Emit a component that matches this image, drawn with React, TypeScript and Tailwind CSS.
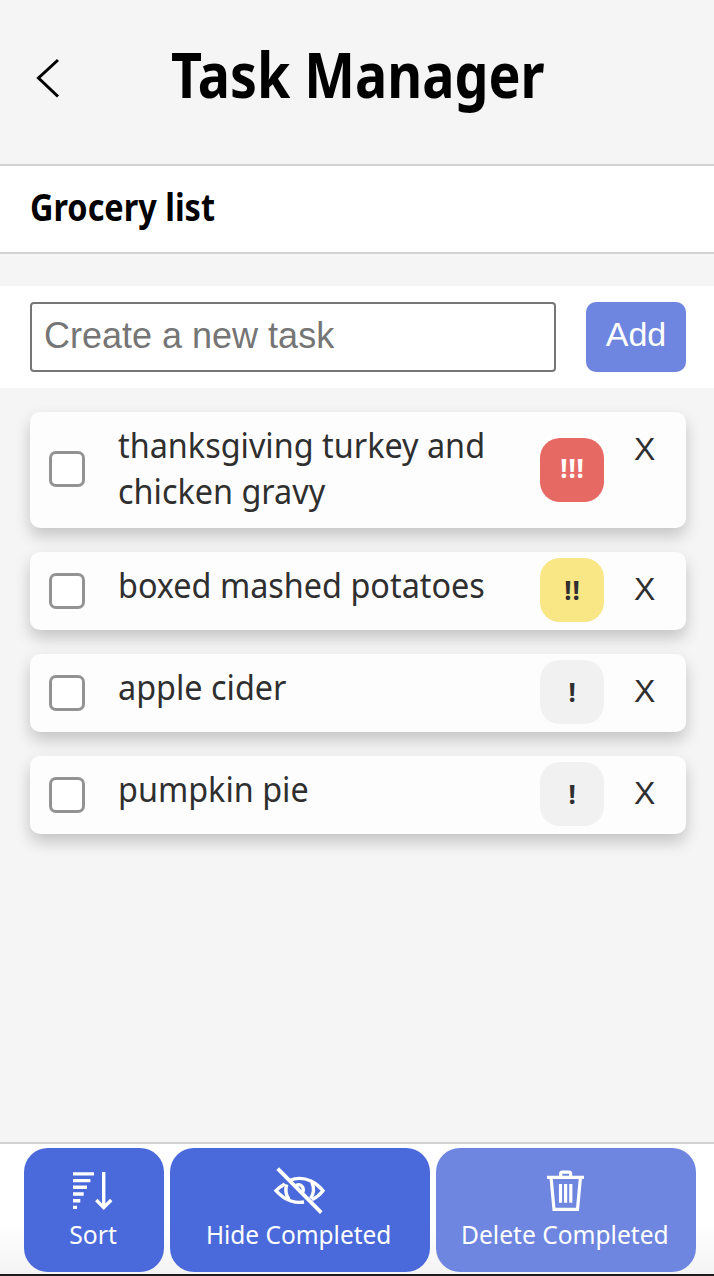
import React from "react";

type Priority = 1 | 2 | 3;

const tasks: { id: number; text: string; priority: Priority }[] = [
  { id: 1, text: "thanksgiving turkey and chicken gravy", priority: 3 },
  { id: 2, text: "boxed mashed potatoes", priority: 2 },
  { id: 3, text: "apple cider", priority: 1 },
  { id: 4, text: "pumpkin pie", priority: 1 },
];

const badgeStyle: Record<Priority, string> = {
  1: "mb-[2px] bg-[#f1f1f1] text-[#2f2f2f]",
  2: "mb-[2px] bg-[#f9e685] text-[#2f2f2f]",
  3: "pb-1 bg-[#e66a63] text-white",
};

function BackIcon() {
  return (
    <svg width="28" height="44" viewBox="34 56 28 44" fill="none" stroke="#000" strokeWidth="3">
      <path d="M58 60 L38.5 78 L58 96.5" />
    </svg>
  );
}

function SortIcon() {
  return (
    <svg className="-ml-[4px]" width="44" height="48" viewBox="70 1167 44 48" fill="none" stroke="#fff" strokeWidth="3.4">
      <path d="M73 1173.9H94M73 1180.6H90.4M73 1187.3H87M73 1194H83.7M73 1200.7H80.3M73 1207.4H77" />
      <path d="M103.7 1172V1207.5M96.3 1200L103.7 1207.6L111.2 1200" />
    </svg>
  );
}

function HiddenIcon() {
  return (
    <svg width="56" height="48" viewBox="272 1167 56 48" fill="none" stroke="#fff" strokeWidth="3.4">
      <path d="M289.5 1180.6Q300 1176 311 1181Q318 1184.5 323 1190.7Q318.5 1196.5 312 1199.7" />
      <path d="M284.8 1184Q279.5 1187 276 1190.7Q283 1198.5 291 1201Q297.5 1203.2 304 1202" />
      <path d="M286.8 1184.5Q284 1192 289 1199.5" />
      <path d="M311.8 1182Q315.8 1191 310.5 1198.5" />
      <path d="M296 1185.5Q300 1183.5 302.6 1187Q304 1190 302.5 1192.5" />
      <path d="M277.7 1168.6L321.3 1212.6" strokeWidth="3.8" />
    </svg>
  );
}

function TrashIcon() {
  return (
    <svg className="-ml-[2px]" width="42" height="48" viewBox="544 1167 42 48" fill="none" stroke="#fff" strokeWidth="3.2">
      <path d="M547 1177.4H584" strokeWidth="3.4" />
      <path d="M560.7 1177V1173.8Q560.7 1172.1 562.4 1172.1H568.8Q570.6 1172.1 570.6 1173.8V1177" />
      <path d="M551.1 1178L554 1209.3H577.5L580.4 1178" />
      <path d="M560.5 1184V1202.7M565.6 1184V1202.7M570.8 1184V1202.7" />
    </svg>
  );
}

export default function App() {
  return (
    <div className="flex h-[1276px] w-[714px] flex-col overflow-hidden bg-[#f5f5f5] font-['Noto_Sans',sans-serif]">
      <header className="relative flex h-[166px] shrink-0 items-start justify-center border-b-2 border-[#d2d2d2] pt-[33px]">
        <button className="absolute left-[34px] top-[56px]" aria-label="Back">
          <BackIcon />
        </button>
        <h1 className="ml-[2px] scale-x-[0.854] whitespace-nowrap text-[63px] font-bold leading-[82px] text-black">Task Manager</h1>
      </header>
      <section className="flex h-[88px] shrink-0 items-start border-b-2 border-[#d2d2d2] bg-white pl-[30px] pt-[15px]">
        <h2 className="origin-left scale-x-[0.877] whitespace-nowrap text-[37px] font-bold leading-[52px] text-black">Grocery list</h2>
      </section>
      <form className="mt-8 flex h-[102px] shrink-0 gap-[30px] bg-white pl-[30px] pr-[28px] pt-4 font-['Liberation_Sans',Arial,sans-serif]">
        <input
          className="h-[70px] w-[526px] rounded-[4px] border-2 border-[#767676] bg-white pb-[3px] pl-3 text-[36px] outline-none placeholder:text-[#757575]"
          placeholder="Create a new task"
        />
        <button type="button" className="h-[70px] w-[100px] rounded-[10px] bg-[#6e86e0] pb-[5px] text-[34px] text-white">
          Add
        </button>
      </form>
      <ul className="flex flex-1 flex-col gap-6 pl-[30px] pr-[28px] pt-6">
        {tasks.map((t) => (
          <li
            key={t.id}
            className="flex min-h-[78px] items-center rounded-[10px] bg-[#fdfdfd] pl-[19px] text-[#2f2f2f] shadow-[0_8px_16px_rgba(0,0,0,0.2)]"
          >
            <input
              type="checkbox"
              className={`size-9 shrink-0 appearance-none rounded-[7px] border-3 border-[#939393] bg-white ${t.priority === 3 ? "mb-[2px]" : ""}`}
            />
            <div className="ml-[33px] w-[422px] shrink-0 self-start pb-[14px] pt-[10px]">
              <p className="w-[410px] origin-left scale-x-[0.925] text-[35px] leading-[46px]">{t.text}</p>
            </div>
            <span
              className={`flex size-16 shrink-0 items-center justify-center rounded-[20px] pl-px text-[26px] font-bold leading-none tracking-[0.8px] ${badgeStyle[t.priority]}`}
            >
              {"!".repeat(t.priority)}
            </span>
            <button className="ml-[30px] self-start pt-[19px] font-['Liberation_Sans',Arial,sans-serif] text-[32px] leading-9">X</button>
          </li>
        ))}
      </ul>
      <footer className="flex h-[134px] shrink-0 gap-[6px] border-t-2 border-b-2 border-t-[#d2d2d2] border-b-[#1d1a1c] bg-linear-to-b from-white from-60% to-[#f4f4f4] pl-6 pt-1">
        <button className="flex h-[124px] w-[140px] flex-col items-center rounded-[24px] bg-[#4a69da] pt-[19px] text-white">
          <SortIcon />
          <span className="-mt-px -ml-[2px] scale-x-[0.95] whitespace-nowrap text-[26px] leading-10">Sort</span>
        </button>
        <button className="flex h-[124px] w-[260px] flex-col items-center rounded-[24px] bg-[#4a69da] pt-[19px] text-white">
          <HiddenIcon />
          <span className="-mt-px -ml-[2px] scale-x-[0.94] whitespace-nowrap text-[26px] leading-10">Hide Completed</span>
        </button>
        <button className="flex h-[124px] w-[260px] flex-col items-center rounded-[24px] bg-[#6e86e0] pt-[19px] text-white">
          <TrashIcon />
          <span className="-mt-px -ml-[2px] scale-x-[0.945] whitespace-nowrap text-[26px] leading-10">Delete Completed</span>
        </button>
      </footer>
    </div>
  );
}
